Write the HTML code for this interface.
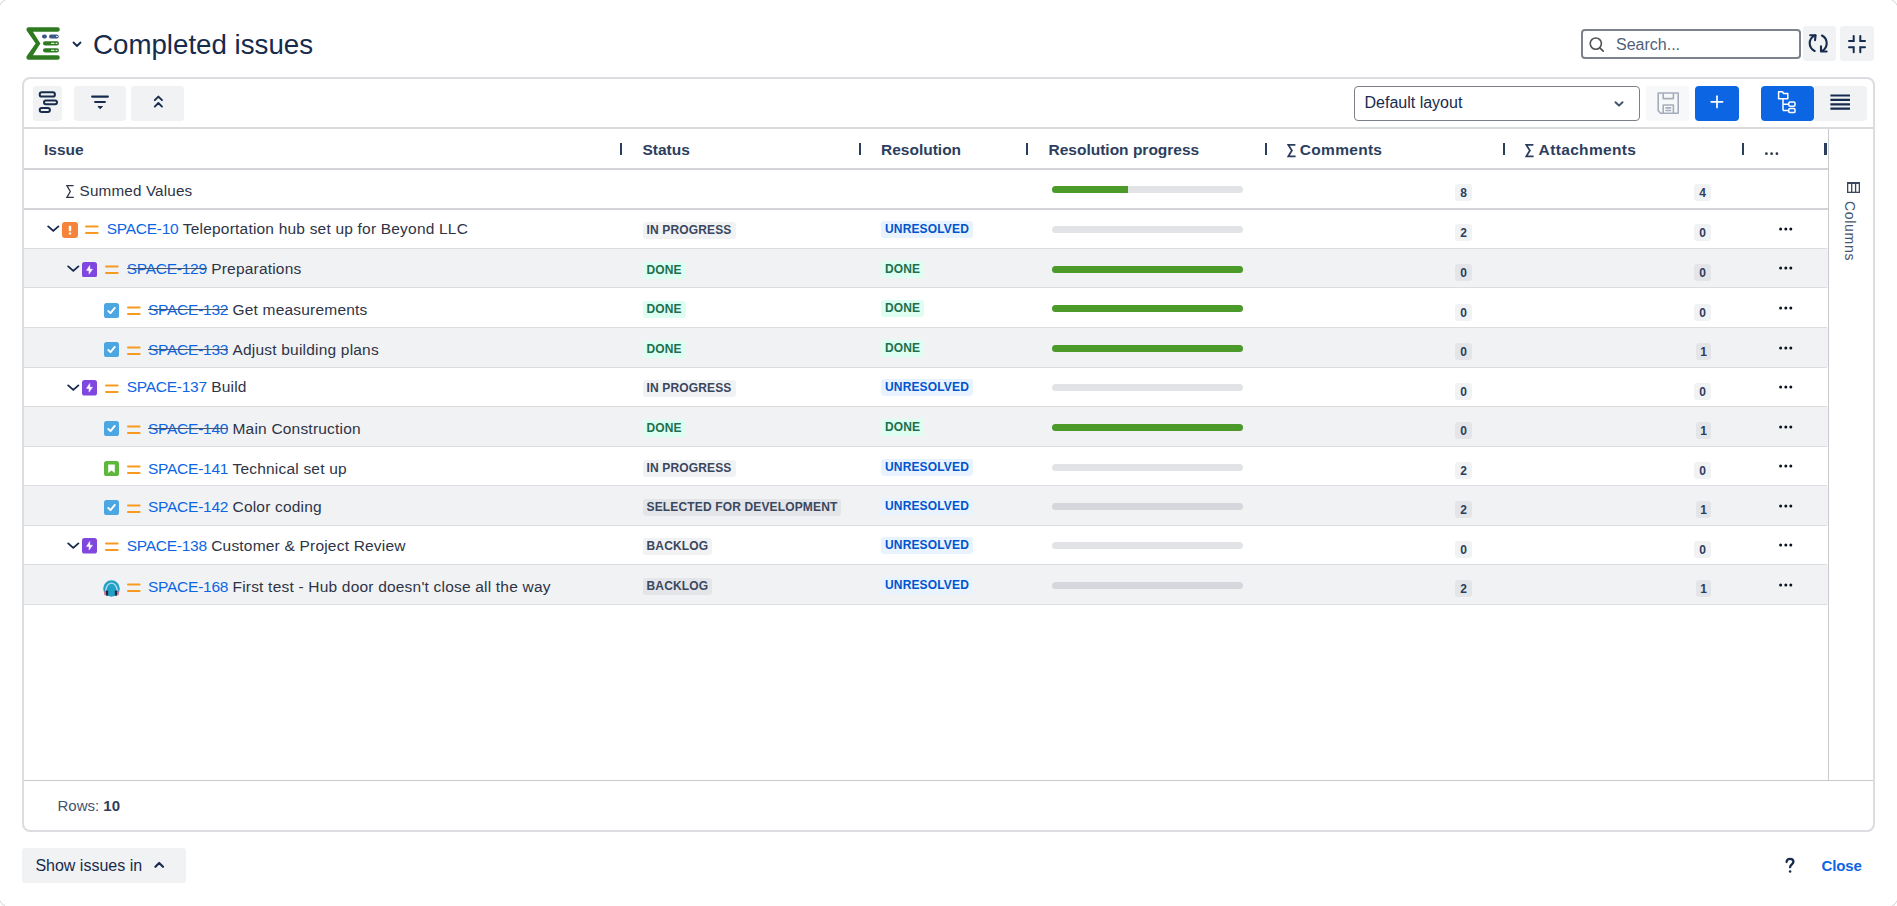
<!DOCTYPE html>
<html><head><meta charset="utf-8"><title>Completed issues</title>
<style>
html,body{margin:0;padding:0;}
body{width:1897px;height:906px;position:relative;overflow:hidden;background:#fff;font-family:"Liberation Sans", sans-serif;}
.t{position:absolute;white-space:nowrap;}
.key{color:#0C66E4;letter-spacing:-0.25px;position:relative;}
.key.done::after{content:'';position:absolute;left:0;right:0;top:8.4px;height:1px;background:#44546F;}
.sum{letter-spacing:0.2px;}
.b{position:absolute;display:block;}
.loz{position:absolute;height:17px;line-height:17px;letter-spacing:0.15px;padding:0 4px;border-radius:3px;font-size:12px;font-weight:bold;white-space:nowrap;box-sizing:border-box;}
.badge{position:absolute;background:rgba(9,30,66,0.06);border-radius:3px;font-size:12px;font-weight:bold;color:#2C3E5D;text-align:center;line-height:18px;}
</style></head><body>
<div class="b" style="left:-2px;top:-2px;width:1901px;height:910px;box-sizing:border-box;border:1.5px solid #D4D4D4;border-radius:12.5px"></div>
<svg class="b" style="left:24px;top:25px" width="38" height="37" viewBox="0 0 38 37">
<g fill="#2F7A21">
<path d="M2.4 4.4 Q2.4 2.2 4.6 2.2 L33.6 2.2 Q35.8 2.2 35.8 4.45 Q35.8 6.7 33.6 6.7 L8.9 6.7 L16.4 18.4 L8.9 30.2 L33.6 30.2 Q35.8 30.2 35.8 32.45 Q35.8 34.7 33.6 34.7 L4.6 34.7 Q2.4 34.7 2.4 32.5 L2.6 31.3 L11.6 18.4 L2.6 5.6 Z"/>
<rect x="19" y="16.3" width="16" height="4.3" rx="2.15"/>
<rect x="19" y="23.3" width="16" height="4.1" rx="2.05"/>
</g>
<g fill="#3B5687">
<rect x="18" y="9.4" width="4.9" height="4.1" rx="2"/>
<rect x="25" y="9.4" width="9.7" height="4.1" rx="2"/>
</g>
<g fill="#fff" opacity="0.85">
<rect x="27" y="17.8" width="3.5" height="1.3" rx=".6"/>
<rect x="31.5" y="17.8" width="2" height="1.3" rx=".6"/>
<rect x="27" y="24.7" width="3.5" height="1.3" rx=".6"/>
<rect x="31.5" y="24.7" width="2" height="1.3" rx=".6"/>
<rect x="32" y="10.8" width="2" height="1.3" rx=".6"/>
</g>
</svg>
<svg class="b" style="left:72px;top:41px" width="10" height="7" viewBox="0 0 10 7"><path d="M1.5 1.5 L5 5 L8.5 1.5" fill="none" stroke="#172B4D" stroke-width="1.8" stroke-linecap="round" stroke-linejoin="round"/></svg>
<div class="t" style="left:93px;top:31.35px;font-size:27.7px;line-height:27.7px;color:#172B4D;font-weight:normal;">Completed issues</div>
<div class="b" style="left:1581px;top:29px;width:220px;height:30px;box-sizing:border-box;border:2px solid #7D828C;border-radius:4px;background:#fff"></div>
<svg class="b" style="left:1588px;top:36px" width="18" height="18" viewBox="0 0 18 18"><circle cx="7.8" cy="7.6" r="5.6" fill="none" stroke="#505258" stroke-width="1.6"/><path d="M11.8 11.8 L15.2 15.2" stroke="#505258" stroke-width="1.7" stroke-linecap="round"/></svg>
<div class="t" style="left:1616px;top:37.36px;font-size:16px;line-height:16px;color:#505F79;font-weight:normal;">Search...</div>
<div class="b" style="left:1803px;top:26px;width:33px;height:35px;background:#F1F2F4;border-radius:3px"></div>
<svg class="b" style="left:1805px;top:30px" width="28" height="26" viewBox="0 0 28 26">
<g fill="none" stroke="#172B4D" stroke-width="2.1" stroke-linecap="round" stroke-linejoin="round">
<path d="M10.2 5.4 C6.6 7, 4.7 10, 4.7 13.3 C4.7 16.6, 6.5 19.4, 9.6 21"/>
<path d="M5.2 5.3 L10.6 5.3 L10 10.1"/>
<path d="M16.9 5.5 C20 7.1, 21.7 10, 21.7 13.2 C21.7 16.2, 20.4 18.9, 17.4 20.8"/>
<path d="M16 16.4 L16 21.5 L21.6 21.5"/>
</g></svg>
<div class="b" style="left:1840px;top:26px;width:34px;height:35px;background:#F1F2F4;border-radius:3px"></div>
<svg class="b" style="left:1846px;top:33px" width="22" height="22" viewBox="0 0 22 22">
<g fill="none" stroke="#172B4D" stroke-width="2" stroke-linecap="round">
<path d="M7.7 3 L7.7 7.9 L3 7.9"/>
<path d="M14.3 3 L14.3 7.9 L19 7.9"/>
<path d="M3 14.3 L7.7 14.3 L7.7 19.2"/>
<path d="M19 14.3 L14.3 14.3 L14.3 19.2"/>
</g></svg>
<div class="b" style="left:22px;top:77px;width:1853px;height:755px;box-sizing:border-box;border:2px solid #DCDDE1;border-radius:8px;background:#fff"></div>
<div class="b" style="left:24px;top:127px;width:1849px;height:2px;background:#DADBDE"></div>
<div class="b" style="left:33px;top:86px;width:29px;height:35px;background:#F1F2F4;border-radius:3px"></div>
<svg class="b" style="left:33px;top:86px" width="29" height="35" viewBox="0 0 29 35">
<g fill="none" stroke="#172B4D" stroke-width="2">
<rect x="6.7" y="6.2" width="15.2" height="4.4" rx="2.2"/>
<rect x="11" y="14.4" width="13" height="3.8" rx="1.9"/>
<rect x="6.7" y="22" width="10.2" height="4.1" rx="2"/>
</g></svg>
<div class="b" style="left:74px;top:86px;width:52px;height:35px;background:#F1F2F4;border-radius:3px"></div>
<svg class="b" style="left:74px;top:86px" width="52" height="35" viewBox="0 0 52 35">
<g stroke="#172B4D" stroke-width="2.1" stroke-linecap="round">
<path d="M18.1 10.6 L33.9 10.6"/>
<path d="M21.1 16 L30.9 16"/>
</g>
<path d="M23.9 20.5 L28.5 20.5 L26.2 22.7 Z" fill="#172B4D" stroke="#172B4D" stroke-width="0.9" stroke-linejoin="round"/></svg>
<div class="b" style="left:131px;top:86px;width:53px;height:35px;background:#F1F2F4;border-radius:3px"></div>
<svg class="b" style="left:131px;top:86px" width="53" height="35" viewBox="0 0 53 35">
<g fill="none" stroke="#172B4D" stroke-width="1.9" stroke-linecap="round" stroke-linejoin="round">
<path d="M23.8 14.2 L27.4 10.6 L31 14.2"/>
<path d="M23.8 20.6 L27.4 17 L31 20.6"/>
</g></svg>
<div class="b" style="left:1354px;top:86px;width:286px;height:35px;box-sizing:border-box;border:1px solid #7C8088;border-radius:4px;background:#fff"></div>
<div class="t" style="left:1364.5px;top:94.76px;font-size:16px;line-height:16px;color:#172B4D;font-weight:normal;">Default layout</div>
<svg class="b" style="left:1612px;top:98.7px" width="14" height="10" viewBox="0 0 14 10"><path d="M3.5 3.2 L7 6.6 L10.5 3.2" fill="none" stroke="#44546F" stroke-width="2" stroke-linecap="round" stroke-linejoin="round"/></svg>
<div class="b" style="left:1646px;top:86px;width:43px;height:35px;background:#F7F8F9;border-radius:3px"></div>
<svg class="b" style="left:1646px;top:86px" width="43" height="35" viewBox="0 0 43 35">
<g fill="none" stroke="#A5ADBA" stroke-width="1.6" stroke-linejoin="round">
<path d="M12.2 7 L32.2 7 L32.2 27.2 L14.6 27.2 L12.2 24.6 Z"/>
<path d="M17.2 7 L17.2 12.6 L27.4 12.6 L27.4 7"/>
<path d="M17.2 27.2 L17.2 19 L27.4 19 L27.4 27.2"/>
<path d="M19.4 21.9 L25.2 21.9 M19.4 24.5 L25.2 24.5"/>
</g></svg>
<div class="b" style="left:1695px;top:86px;width:44px;height:35px;background:#0C66E4;border-radius:4px"></div>
<svg class="b" style="left:1695px;top:86px" width="44" height="35" viewBox="0 0 44 35"><g stroke="#fff" stroke-width="1.7" stroke-linecap="round"><path d="M22 10.2 L22 21.4"/><path d="M16.2 15.8 L27.6 15.8"/></g></svg>
<div class="b" style="left:1814px;top:86px;width:53px;height:35px;background:#F1F2F4;border-radius:0 4px 4px 0"></div>
<div class="b" style="left:1761px;top:86px;width:53px;height:35px;background:#0C66E4;border-radius:4px"></div>
<svg class="b" style="left:1761px;top:86px" width="53" height="35" viewBox="0 0 53 35">
<g fill="none" stroke="#fff" stroke-width="1.5" stroke-linejoin="round">
<path d="M17.6 5.8 L21.6 5.8 L22.6 7.6 L26.8 7.6 L26.8 12.8 L17.6 12.8 Z"/>
<path d="M22 12.8 L22 24.4 M22 18.2 L27.8 18.2 M22 24.4 L27.8 24.4"/>
<rect x="27.8" y="16" width="6.2" height="4.2" rx="1.2"/>
<rect x="27.8" y="22.4" width="6.2" height="4.2" rx="1.2"/>
</g></svg>
<svg class="b" style="left:1814px;top:86px" width="53" height="35" viewBox="0 0 53 35"><g stroke="#172B4D" stroke-width="2.2"><path d="M16.4 9.5 L36 9.5 M16.4 13.9 L36 13.9 M16.4 18.3 L36 18.3 M16.4 22.6 L36 22.6"/></g></svg>
<div class="b" style="left:24px;top:248px;width:1804px;height:40px;background:#F1F2F4"></div>
<div class="b" style="left:24px;top:328px;width:1804px;height:39px;background:#F1F2F4"></div>
<div class="b" style="left:24px;top:407px;width:1804px;height:39px;background:#F1F2F4"></div>
<div class="b" style="left:24px;top:486px;width:1804px;height:39px;background:#F1F2F4"></div>
<div class="b" style="left:24px;top:565px;width:1804px;height:39px;background:#F1F2F4"></div>
<div class="b" style="left:24px;top:168px;width:1804px;height:2px;background:#D3D4D7"></div>
<div class="b" style="left:24px;top:208px;width:1804px;height:2px;background:#D3D4D7"></div>
<div class="b" style="left:24px;top:248px;width:1803px;height:1px;background:#DCDDE0"></div>
<div class="b" style="left:24px;top:287px;width:1803px;height:1px;background:#DCDDE0"></div>
<div class="b" style="left:24px;top:327px;width:1803px;height:1px;background:#DCDDE0"></div>
<div class="b" style="left:24px;top:367px;width:1803px;height:1px;background:#DCDDE0"></div>
<div class="b" style="left:24px;top:406px;width:1803px;height:1px;background:#DCDDE0"></div>
<div class="b" style="left:24px;top:446px;width:1803px;height:1px;background:#DCDDE0"></div>
<div class="b" style="left:24px;top:485px;width:1803px;height:1px;background:#DCDDE0"></div>
<div class="b" style="left:24px;top:525px;width:1803px;height:1px;background:#DCDDE0"></div>
<div class="b" style="left:24px;top:564px;width:1803px;height:1px;background:#DCDDE0"></div>
<div class="b" style="left:24px;top:604px;width:1803px;height:1px;background:#DCDDE0"></div>
<div class="b" style="left:1828px;top:129px;width:1px;height:651px;background:#C9CACD"></div>
<div class="b" style="left:24px;top:780px;width:1849px;height:1px;background:#C9CACD"></div>
<div class="t" style="left:44px;top:141.68px;font-size:15.5px;line-height:15.5px;color:#2C3E5D;font-weight:bold;">Issue</div>
<div class="t" style="left:642.5px;top:141.68px;font-size:15.5px;line-height:15.5px;color:#2C3E5D;font-weight:bold;">Status</div>
<div class="t" style="left:881px;top:141.68px;font-size:15.5px;line-height:15.5px;color:#2C3E5D;font-weight:bold;">Resolution</div>
<div class="t" style="left:1048.5px;top:141.68px;font-size:15.5px;line-height:15.5px;color:#2C3E5D;font-weight:bold;">Resolution progress</div>
<svg class="b" style="left:1287px;top:143px" width="11" height="16" viewBox="0 0 11 16"><path d="M8.4 1.9 L1.3 1.9 L4.9 7.6 L1.3 13.3 L8.6 13.3" fill="none" stroke="#2C3E5D" stroke-width="1.8" stroke-linejoin="miter"/></svg>
<svg class="b" style="left:1525px;top:143px" width="11" height="16" viewBox="0 0 11 16"><path d="M8.4 1.9 L1.3 1.9 L4.9 7.6 L1.3 13.3 L8.6 13.3" fill="none" stroke="#2C3E5D" stroke-width="1.8" stroke-linejoin="miter"/></svg>
<div class="t" style="left:1299.8px;top:141.68px;font-size:15.5px;line-height:15.5px;color:#2C3E5D;font-weight:bold;letter-spacing:0.3px">Comments</div>
<div class="t" style="left:1538.6px;top:141.68px;font-size:15.5px;line-height:15.5px;color:#2C3E5D;font-weight:bold;letter-spacing:0.35px">Attachments</div>
<svg class="b" style="left:1762px;top:150px" width="18" height="8" viewBox="0 0 18 8"><g fill="#2E3648"><circle cx="4.4" cy="3.7" r="1.35"/><circle cx="9.6" cy="3.7" r="1.35"/><circle cx="14.9" cy="3.7" r="1.35"/></g></svg>
<div class="b" style="left:620px;top:143px;width:2px;height:12px;background:#2C3E5D"></div>
<div class="b" style="left:859px;top:143px;width:2px;height:12px;background:#2C3E5D"></div>
<div class="b" style="left:1026px;top:143px;width:2px;height:12px;background:#2C3E5D"></div>
<div class="b" style="left:1265px;top:143px;width:2px;height:12px;background:#2C3E5D"></div>
<div class="b" style="left:1503px;top:143px;width:2px;height:12px;background:#2C3E5D"></div>
<div class="b" style="left:1742px;top:143px;width:2px;height:12px;background:#2C3E5D"></div>
<div class="b" style="left:1824px;top:143px;width:3px;height:12px;background:#2C3E5D"></div>
<svg class="b" style="left:65px;top:184px" width="10" height="15" viewBox="0 0 10 15"><path d="M8.6 1.6 L1.9 1.6 L5.3 7.5 L1.9 13.3 L8.8 13.3" fill="none" stroke="#2E3446" stroke-width="1.3" stroke-linejoin="miter"/></svg>
<div class="t" style="left:79.6px;top:182.99px;font-size:15.25px;line-height:15.25px;color:#2E3446;font-weight:normal;letter-spacing:0.15px">Summed Values</div>
<div class="b" style="left:1052px;top:186px;width:191px;height:7px;background:rgba(16,28,52,0.12);border-radius:3.5px;overflow:hidden"></div>
<div class="b" style="left:1052px;top:186px;width:76px;height:7px;background:#4C9A2A;border-radius:3.5px 0 0 3.5px"></div>
<div class="badge" style="left:1455px;top:184px;width:17px;height:17px;">8</div>
<div class="badge" style="left:1694px;top:184px;width:17px;height:17px;">4</div>
<svg class="b" style="left:46px;top:224.3px" width="14" height="10" viewBox="0 0 14 10"><path d="M2.2 2.4 L7.3 6.9 L12.4 2.4" fill="none" stroke="#172B4D" stroke-width="1.9" stroke-linecap="round" stroke-linejoin="round"/></svg>
<svg class="b" style="left:62px;top:222.10000000000002px" width="16" height="16" viewBox="0 0 16 16"><rect x="0" y="0" width="16" height="16" rx="3" fill="#F5843A"/><rect x="6.8" y="3.8" width="2.4" height="5.4" rx="0.6" fill="#fff"/><rect x="6.8" y="10.4" width="2.4" height="2.2" rx="0.6" fill="#fff"/></svg>
<svg class="b" style="left:85.3px;top:225.3px" width="14" height="10" viewBox="0 0 14 10"><g stroke="#F79A1F" stroke-width="2" stroke-linecap="round"><path d="M1 1.5 L12.6 1.5"/><path d="M1 7.9 L12.6 7.9"/></g></svg>
<div class="t" style="left:106.7px;top:221px;font-size:15.5px;line-height:15.5px;color:#2E3446"><span class="key">SPACE-10</span> <span class="sum">Teleportation hub set up for Beyond LLC</span></div>
<div class="loz" style="left:642.5px;top:222px;background:rgba(9,30,66,0.06);color:#3A475E">IN PROGRESS</div>
<div class="loz" style="left:881px;top:221px;background:#E9F2FF;color:#0055CC">UNRESOLVED</div>
<div class="b" style="left:1052px;top:226px;width:191px;height:7px;background:rgba(16,28,52,0.12);border-radius:3.5px;overflow:hidden"></div>
<div class="badge" style="left:1455px;top:224px;width:17px;height:17px;">2</div>
<div class="badge" style="left:1694px;top:224px;width:17px;height:17px;">0</div>
<svg class="b" style="left:1777px;top:226px" width="17" height="6" viewBox="0 0 17 6"><g fill="#0B1220"><circle cx="3.6" cy="3" r="1.5"/><circle cx="8.8" cy="3" r="1.5"/><circle cx="13.8" cy="3" r="1.5"/></g></svg>
<svg class="b" style="left:66px;top:263.9px" width="14" height="10" viewBox="0 0 14 10"><path d="M2.2 2.4 L7.3 6.9 L12.4 2.4" fill="none" stroke="#172B4D" stroke-width="1.9" stroke-linecap="round" stroke-linejoin="round"/></svg>
<svg class="b" style="left:82px;top:261.5px" width="15" height="15.5" viewBox="0 0 15 15.5"><rect x="0" y="0" width="15" height="15.5" rx="2.6" fill="#8047DE"/><path d="M7.7 3.5 L4.5 8.4 L7.1 8.4 L7 12.1 L10.5 7.3 L7.9 7.3 Z" fill="#fff" stroke="#fff" stroke-width="0.5" stroke-linejoin="round"/></svg>
<svg class="b" style="left:105.3px;top:264.9px" width="14" height="10" viewBox="0 0 14 10"><g stroke="#F79A1F" stroke-width="2" stroke-linecap="round"><path d="M1 1.5 L12.6 1.5"/><path d="M1 7.9 L12.6 7.9"/></g></svg>
<div class="t" style="left:126.7px;top:261px;font-size:15.5px;line-height:15.5px;color:#2E3446"><span class="key done">SPACE-129</span> <span class="sum">Preparations</span></div>
<div class="loz" style="left:642.5px;top:262px;background:#DCFFF1;color:#216E4E">DONE</div>
<div class="loz" style="left:881px;top:261px;background:#DCFFF1;color:#216E4E">DONE</div>
<div class="b" style="left:1052px;top:266px;width:191px;height:7px;background:rgba(16,28,52,0.12);border-radius:3.5px;overflow:hidden"></div>
<div class="b" style="left:1052px;top:266px;width:191px;height:7px;background:#4C9A2A;border-radius:3.5px"></div>
<div class="badge" style="left:1455px;top:264px;width:17px;height:17px;">0</div>
<div class="badge" style="left:1694px;top:264px;width:17px;height:17px;">0</div>
<svg class="b" style="left:1777px;top:265px" width="17" height="6" viewBox="0 0 17 6"><g fill="#0B1220"><circle cx="3.6" cy="3" r="1.5"/><circle cx="8.8" cy="3" r="1.5"/><circle cx="13.8" cy="3" r="1.5"/></g></svg>
<svg class="b" style="left:104px;top:302.5px" width="15" height="15" viewBox="0 0 15 15"><rect x="0" y="0" width="15" height="15" rx="2.6" fill="#4BA6E1"/><path d="M4.3 8 L6.5 10.2 L10.8 4.9" fill="none" stroke="#fff" stroke-width="1.9" stroke-linecap="round" stroke-linejoin="round"/></svg>
<svg class="b" style="left:127px;top:306.4px" width="14" height="10" viewBox="0 0 14 10"><g stroke="#F79A1F" stroke-width="2" stroke-linecap="round"><path d="M1 1.5 L12.6 1.5"/><path d="M1 7.9 L12.6 7.9"/></g></svg>
<div class="t" style="left:148px;top:302px;font-size:15.5px;line-height:15.5px;color:#2E3446"><span class="key done">SPACE-132</span> <span class="sum">Get measurements</span></div>
<div class="loz" style="left:642.5px;top:301px;background:#DCFFF1;color:#216E4E">DONE</div>
<div class="loz" style="left:881px;top:300px;background:#DCFFF1;color:#216E4E">DONE</div>
<div class="b" style="left:1052px;top:305px;width:191px;height:7px;background:rgba(16,28,52,0.12);border-radius:3.5px;overflow:hidden"></div>
<div class="b" style="left:1052px;top:305px;width:191px;height:7px;background:#4C9A2A;border-radius:3.5px"></div>
<div class="badge" style="left:1455px;top:304px;width:17px;height:17px;">0</div>
<div class="badge" style="left:1694px;top:304px;width:17px;height:17px;">0</div>
<svg class="b" style="left:1777px;top:305px" width="17" height="6" viewBox="0 0 17 6"><g fill="#0B1220"><circle cx="3.6" cy="3" r="1.5"/><circle cx="8.8" cy="3" r="1.5"/><circle cx="13.8" cy="3" r="1.5"/></g></svg>
<svg class="b" style="left:104px;top:342.1px" width="15" height="15" viewBox="0 0 15 15"><rect x="0" y="0" width="15" height="15" rx="2.6" fill="#4BA6E1"/><path d="M4.3 8 L6.5 10.2 L10.8 4.9" fill="none" stroke="#fff" stroke-width="1.9" stroke-linecap="round" stroke-linejoin="round"/></svg>
<svg class="b" style="left:127px;top:346.0px" width="14" height="10" viewBox="0 0 14 10"><g stroke="#F79A1F" stroke-width="2" stroke-linecap="round"><path d="M1 1.5 L12.6 1.5"/><path d="M1 7.9 L12.6 7.9"/></g></svg>
<div class="t" style="left:148px;top:342px;font-size:15.5px;line-height:15.5px;color:#2E3446"><span class="key done">SPACE-133</span> <span class="sum">Adjust building plans</span></div>
<div class="loz" style="left:642.5px;top:341px;background:#DCFFF1;color:#216E4E">DONE</div>
<div class="loz" style="left:881px;top:340px;background:#DCFFF1;color:#216E4E">DONE</div>
<div class="b" style="left:1052px;top:345px;width:191px;height:7px;background:rgba(16,28,52,0.12);border-radius:3.5px;overflow:hidden"></div>
<div class="b" style="left:1052px;top:345px;width:191px;height:7px;background:#4C9A2A;border-radius:3.5px"></div>
<div class="badge" style="left:1455px;top:343px;width:17px;height:17px;">0</div>
<div class="badge" style="left:1696px;top:343px;width:15px;height:17px;">1</div>
<svg class="b" style="left:1777px;top:345px" width="17" height="6" viewBox="0 0 17 6"><g fill="#0B1220"><circle cx="3.6" cy="3" r="1.5"/><circle cx="8.8" cy="3" r="1.5"/><circle cx="13.8" cy="3" r="1.5"/></g></svg>
<svg class="b" style="left:66px;top:382.7px" width="14" height="10" viewBox="0 0 14 10"><path d="M2.2 2.4 L7.3 6.9 L12.4 2.4" fill="none" stroke="#172B4D" stroke-width="1.9" stroke-linecap="round" stroke-linejoin="round"/></svg>
<svg class="b" style="left:82px;top:380.3px" width="15" height="15.5" viewBox="0 0 15 15.5"><rect x="0" y="0" width="15" height="15.5" rx="2.6" fill="#8047DE"/><path d="M7.7 3.5 L4.5 8.4 L7.1 8.4 L7 12.1 L10.5 7.3 L7.9 7.3 Z" fill="#fff" stroke="#fff" stroke-width="0.5" stroke-linejoin="round"/></svg>
<svg class="b" style="left:105.3px;top:383.7px" width="14" height="10" viewBox="0 0 14 10"><g stroke="#F79A1F" stroke-width="2" stroke-linecap="round"><path d="M1 1.5 L12.6 1.5"/><path d="M1 7.9 L12.6 7.9"/></g></svg>
<div class="t" style="left:126.7px;top:379px;font-size:15.5px;line-height:15.5px;color:#2E3446"><span class="key">SPACE-137</span> <span class="sum">Build</span></div>
<div class="loz" style="left:642.5px;top:380px;background:rgba(9,30,66,0.06);color:#3A475E">IN PROGRESS</div>
<div class="loz" style="left:881px;top:379px;background:#E9F2FF;color:#0055CC">UNRESOLVED</div>
<div class="b" style="left:1052px;top:384px;width:191px;height:7px;background:rgba(16,28,52,0.12);border-radius:3.5px;overflow:hidden"></div>
<div class="badge" style="left:1455px;top:383px;width:17px;height:17px;">0</div>
<div class="badge" style="left:1694px;top:383px;width:17px;height:17px;">0</div>
<svg class="b" style="left:1777px;top:384px" width="17" height="6" viewBox="0 0 17 6"><g fill="#0B1220"><circle cx="3.6" cy="3" r="1.5"/><circle cx="8.8" cy="3" r="1.5"/><circle cx="13.8" cy="3" r="1.5"/></g></svg>
<svg class="b" style="left:104px;top:421.0px" width="15" height="15" viewBox="0 0 15 15"><rect x="0" y="0" width="15" height="15" rx="2.6" fill="#4BA6E1"/><path d="M4.3 8 L6.5 10.2 L10.8 4.9" fill="none" stroke="#fff" stroke-width="1.9" stroke-linecap="round" stroke-linejoin="round"/></svg>
<svg class="b" style="left:127px;top:424.9px" width="14" height="10" viewBox="0 0 14 10"><g stroke="#F79A1F" stroke-width="2" stroke-linecap="round"><path d="M1 1.5 L12.6 1.5"/><path d="M1 7.9 L12.6 7.9"/></g></svg>
<div class="t" style="left:148px;top:421px;font-size:15.5px;line-height:15.5px;color:#2E3446"><span class="key done">SPACE-140</span> <span class="sum">Main Construction</span></div>
<div class="loz" style="left:642.5px;top:420px;background:#DCFFF1;color:#216E4E">DONE</div>
<div class="loz" style="left:881px;top:419px;background:#DCFFF1;color:#216E4E">DONE</div>
<div class="b" style="left:1052px;top:424px;width:191px;height:7px;background:rgba(16,28,52,0.12);border-radius:3.5px;overflow:hidden"></div>
<div class="b" style="left:1052px;top:424px;width:191px;height:7px;background:#4C9A2A;border-radius:3.5px"></div>
<div class="badge" style="left:1455px;top:422px;width:17px;height:17px;">0</div>
<div class="badge" style="left:1696px;top:422px;width:15px;height:17px;">1</div>
<svg class="b" style="left:1777px;top:424px" width="17" height="6" viewBox="0 0 17 6"><g fill="#0B1220"><circle cx="3.6" cy="3" r="1.5"/><circle cx="8.8" cy="3" r="1.5"/><circle cx="13.8" cy="3" r="1.5"/></g></svg>
<svg class="b" style="left:104px;top:460.7px" width="15" height="15" viewBox="0 0 15 15"><rect x="0" y="0" width="15" height="15" rx="2.6" fill="#5DB73B"/><path d="M4.2 3.4 L10.8 3.4 L10.8 12 L7.5 9.4 L4.2 12 Z" fill="#fff"/></svg>
<svg class="b" style="left:127px;top:464.59999999999997px" width="14" height="10" viewBox="0 0 14 10"><g stroke="#F79A1F" stroke-width="2" stroke-linecap="round"><path d="M1 1.5 L12.6 1.5"/><path d="M1 7.9 L12.6 7.9"/></g></svg>
<div class="t" style="left:148px;top:461px;font-size:15.5px;line-height:15.5px;color:#2E3446"><span class="key">SPACE-141</span> <span class="sum">Technical set up</span></div>
<div class="loz" style="left:642.5px;top:460px;background:rgba(9,30,66,0.06);color:#3A475E">IN PROGRESS</div>
<div class="loz" style="left:881px;top:459px;background:#E9F2FF;color:#0055CC">UNRESOLVED</div>
<div class="b" style="left:1052px;top:464px;width:191px;height:7px;background:rgba(16,28,52,0.12);border-radius:3.5px;overflow:hidden"></div>
<div class="badge" style="left:1455px;top:462px;width:17px;height:17px;">2</div>
<div class="badge" style="left:1694px;top:462px;width:17px;height:17px;">0</div>
<svg class="b" style="left:1777px;top:463px" width="17" height="6" viewBox="0 0 17 6"><g fill="#0B1220"><circle cx="3.6" cy="3" r="1.5"/><circle cx="8.8" cy="3" r="1.5"/><circle cx="13.8" cy="3" r="1.5"/></g></svg>
<svg class="b" style="left:104px;top:500.00000000000006px" width="15" height="15" viewBox="0 0 15 15"><rect x="0" y="0" width="15" height="15" rx="2.6" fill="#4BA6E1"/><path d="M4.3 8 L6.5 10.2 L10.8 4.9" fill="none" stroke="#fff" stroke-width="1.9" stroke-linecap="round" stroke-linejoin="round"/></svg>
<svg class="b" style="left:127px;top:503.90000000000003px" width="14" height="10" viewBox="0 0 14 10"><g stroke="#F79A1F" stroke-width="2" stroke-linecap="round"><path d="M1 1.5 L12.6 1.5"/><path d="M1 7.9 L12.6 7.9"/></g></svg>
<div class="t" style="left:148px;top:499px;font-size:15.5px;line-height:15.5px;color:#2E3446"><span class="key">SPACE-142</span> <span class="sum">Color coding</span></div>
<div class="loz" style="left:642.5px;top:499px;background:rgba(9,30,66,0.06);color:#3A475E">SELECTED FOR DEVELOPMENT</div>
<div class="loz" style="left:881px;top:498px;background:#E9F2FF;color:#0055CC">UNRESOLVED</div>
<div class="b" style="left:1052px;top:503px;width:191px;height:7px;background:rgba(16,28,52,0.12);border-radius:3.5px;overflow:hidden"></div>
<div class="badge" style="left:1455px;top:501px;width:17px;height:17px;">2</div>
<div class="badge" style="left:1696px;top:501px;width:15px;height:17px;">1</div>
<svg class="b" style="left:1777px;top:503px" width="17" height="6" viewBox="0 0 17 6"><g fill="#0B1220"><circle cx="3.6" cy="3" r="1.5"/><circle cx="8.8" cy="3" r="1.5"/><circle cx="13.8" cy="3" r="1.5"/></g></svg>
<svg class="b" style="left:66px;top:540.8px" width="14" height="10" viewBox="0 0 14 10"><path d="M2.2 2.4 L7.3 6.9 L12.4 2.4" fill="none" stroke="#172B4D" stroke-width="1.9" stroke-linecap="round" stroke-linejoin="round"/></svg>
<svg class="b" style="left:82px;top:538.4px" width="15" height="15.5" viewBox="0 0 15 15.5"><rect x="0" y="0" width="15" height="15.5" rx="2.6" fill="#8047DE"/><path d="M7.7 3.5 L4.5 8.4 L7.1 8.4 L7 12.1 L10.5 7.3 L7.9 7.3 Z" fill="#fff" stroke="#fff" stroke-width="0.5" stroke-linejoin="round"/></svg>
<svg class="b" style="left:105.3px;top:541.8px" width="14" height="10" viewBox="0 0 14 10"><g stroke="#F79A1F" stroke-width="2" stroke-linecap="round"><path d="M1 1.5 L12.6 1.5"/><path d="M1 7.9 L12.6 7.9"/></g></svg>
<div class="t" style="left:126.7px;top:538px;font-size:15.5px;line-height:15.5px;color:#2E3446"><span class="key">SPACE-138</span> <span class="sum">Customer &amp; Project Review</span></div>
<div class="loz" style="left:642.5px;top:538px;background:rgba(9,30,66,0.06);color:#3A475E">BACKLOG</div>
<div class="loz" style="left:881px;top:537px;background:#E9F2FF;color:#0055CC">UNRESOLVED</div>
<div class="b" style="left:1052px;top:542px;width:191px;height:7px;background:rgba(16,28,52,0.12);border-radius:3.5px;overflow:hidden"></div>
<div class="badge" style="left:1455px;top:541px;width:17px;height:17px;">0</div>
<div class="badge" style="left:1694px;top:541px;width:17px;height:17px;">0</div>
<svg class="b" style="left:1777px;top:542px" width="17" height="6" viewBox="0 0 17 6"><g fill="#0B1220"><circle cx="3.6" cy="3" r="1.5"/><circle cx="8.8" cy="3" r="1.5"/><circle cx="13.8" cy="3" r="1.5"/></g></svg>
<svg class="b" style="left:103px;top:579.6px" width="17" height="17" viewBox="0 0 17 17"><circle cx="8.5" cy="8.5" r="8.3" fill="#23A0C8"/>
<path d="M2.8 11 A5.7 7.9 0 0 1 14.2 11" fill="none" stroke="#B5E0EE" stroke-width="1.3"/>
<rect x="2.7" y="10.4" width="2.5" height="5.4" rx="0.7" fill="#1F2A3D"/>
<rect x="11.8" y="10.4" width="2.5" height="5.4" rx="0.7" fill="#1F2A3D"/>
<rect x="1.1" y="11.2" width="1.7" height="4" rx="0.6" fill="#E0719B"/>
<rect x="14.2" y="11.2" width="1.7" height="4" rx="0.6" fill="#E0719B"/></svg>
<svg class="b" style="left:127px;top:583.2px" width="14" height="10" viewBox="0 0 14 10"><g stroke="#F79A1F" stroke-width="2" stroke-linecap="round"><path d="M1 1.5 L12.6 1.5"/><path d="M1 7.9 L12.6 7.9"/></g></svg>
<div class="t" style="left:148px;top:579px;font-size:15.5px;line-height:15.5px;color:#2E3446"><span class="key">SPACE-168</span> <span class="sum">First test - Hub door doesn't close all the way</span></div>
<div class="loz" style="left:642.5px;top:578px;background:rgba(9,30,66,0.06);color:#3A475E">BACKLOG</div>
<div class="loz" style="left:881px;top:577px;background:#E9F2FF;color:#0055CC">UNRESOLVED</div>
<div class="b" style="left:1052px;top:582px;width:191px;height:7px;background:rgba(16,28,52,0.12);border-radius:3.5px;overflow:hidden"></div>
<div class="badge" style="left:1455px;top:580px;width:17px;height:17px;">2</div>
<div class="badge" style="left:1696px;top:580px;width:15px;height:17px;">1</div>
<svg class="b" style="left:1777px;top:582px" width="17" height="6" viewBox="0 0 17 6"><g fill="#0B1220"><circle cx="3.6" cy="3" r="1.5"/><circle cx="8.8" cy="3" r="1.5"/><circle cx="13.8" cy="3" r="1.5"/></g></svg>
<svg class="b" style="left:1846px;top:181px" width="15" height="13" viewBox="0 0 15 13"><g fill="none" stroke="#3A475E" stroke-width="1.3"><rect x="1.65" y="1.65" width="11.7" height="9.7"/><path d="M5.7 1.65 L5.7 11.35 M9.6 1.65 L9.6 11.35"/></g><rect x="1" y="1" width="13" height="2" fill="#3A475E"/></svg>
<div class="t" style="left:1842.3px;top:201px;font-size:14px;line-height:15px;letter-spacing:0.7px;color:#44546F;writing-mode:vertical-rl;">Columns</div>
<div class="t" style="left:57.5px;top:798.30px;font-size:15px;line-height:15px;color:#44546F">Rows: <b style="color:#2C3E5D">10</b></div>
<div class="b" style="left:22px;top:848px;width:164px;height:35px;background:#F1F2F4;border-radius:3px"></div>
<div class="t" style="left:35.4px;top:858.26px;font-size:16px;line-height:16px;color:#172B4D;font-weight:normal;">Show issues in</div>
<svg class="b" style="left:152px;top:859px" width="14" height="11" viewBox="0 0 14 11"><path d="M3.4 7.8 L7.2 4 L11 7.8" fill="none" stroke="#172B4D" stroke-width="2.2" stroke-linecap="round" stroke-linejoin="round"/></svg>
<svg class="b" style="left:1784px;top:857px" width="12" height="17" viewBox="0 0 12 17"><path d="M2.6 5 C2.6 2.9, 4.1 1.8, 6.1 1.8 C8.1 1.8, 9.4 3, 9.4 4.8 C9.4 7.1, 6.2 7.6, 6.1 10.2" fill="none" stroke="#172B4D" stroke-width="2.3" stroke-linecap="round"/><circle cx="6.1" cy="14.4" r="1.25" fill="#172B4D"/></svg>
<div class="t" style="left:1821.5px;top:858.30px;font-size:15px;line-height:15px;color:#0C66E4;font-weight:bold;letter-spacing:-0.15px">Close</div>
</body></html>
